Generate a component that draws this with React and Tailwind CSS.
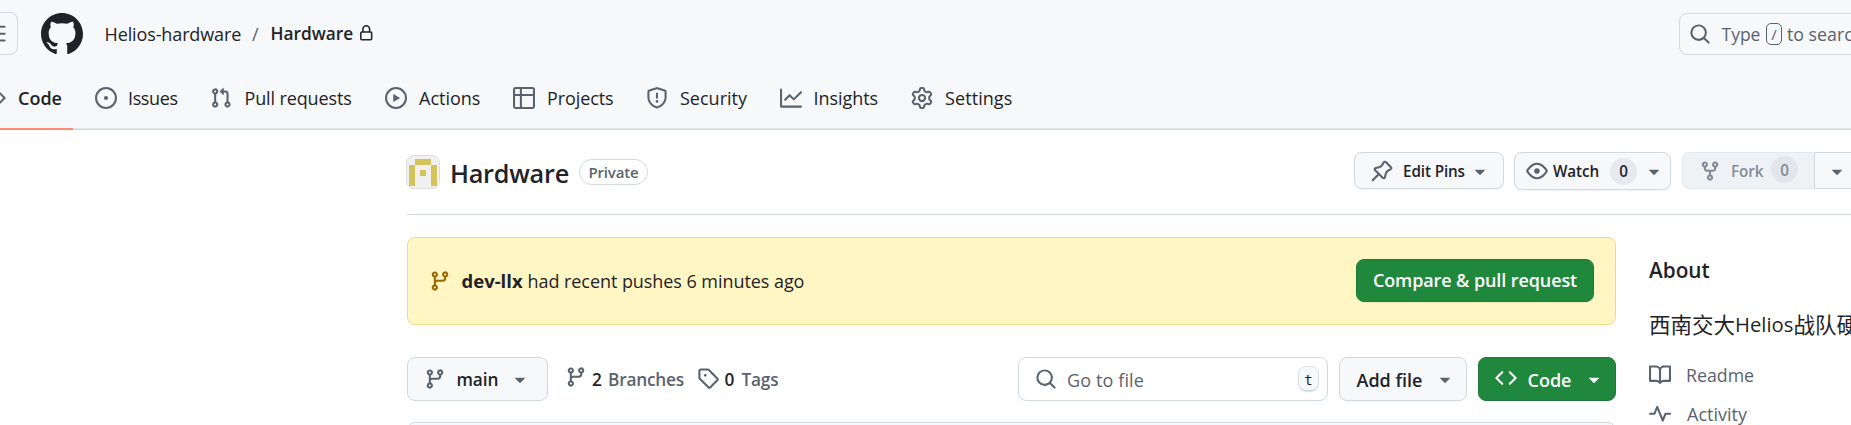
import React from "react";

const PATHS = {
  code: "m11.28 3.22 4.25 4.25a.75.75 0 0 1 0 1.06l-4.25 4.25a.749.749 0 0 1-1.275-.326.749.749 0 0 1 .215-.734L13.94 8l-3.72-3.72a.749.749 0 0 1 .326-1.275.749.749 0 0 1 .734.215Zm-6.56 0a.751.751 0 0 1 1.042.018.751.751 0 0 1 .018 1.042L2.06 8l3.72 3.72a.749.749 0 0 1-.326 1.275.749.749 0 0 1-.734-.215L.47 8.53a.75.75 0 0 1 0-1.06Z",
  issue: "M8 9.5a1.5 1.5 0 1 0 0-3 1.5 1.5 0 0 0 0 3ZM8 0a8 8 0 1 1 0 16A8 8 0 0 1 8 0ZM1.5 8a6.5 6.5 0 1 0 13 0 6.5 6.5 0 0 0-13 0Z",
  pull: "M1.5 3.25a2.25 2.25 0 1 1 3 2.122v5.256a2.251 2.251 0 1 1-1.5 0V5.372A2.25 2.25 0 0 1 1.5 3.25Zm5.677-.177L9.573.677A.25.25 0 0 1 10 .854V2.5h1A2.5 2.5 0 0 1 13.5 5v5.628a2.251 2.251 0 1 1-1.5 0V5a1 1 0 0 0-1-1h-1v1.646a.25.25 0 0 1-.427.177L7.177 3.427a.25.25 0 0 1 0-.354ZM3.75 2.5a.75.75 0 1 0 0 1.5.75.75 0 0 0 0-1.5Zm0 9.5a.75.75 0 1 0 0 1.5.75.75 0 0 0 0-1.5Zm8.25.75a.75.75 0 1 0 1.5 0 .75.75 0 0 0-1.5 0Z",
  play: "M8 0a8 8 0 1 1 0 16A8 8 0 0 1 8 0ZM1.5 8a6.5 6.5 0 1 0 13 0 6.5 6.5 0 0 0-13 0Zm4.879-2.773 4.264 2.559a.25.25 0 0 1 0 .428l-4.264 2.559A.25.25 0 0 1 6 10.559V5.442a.25.25 0 0 1 .379-.215Z",
  table: "M0 1.75C0 .784.784 0 1.75 0h12.5C15.216 0 16 .784 16 1.75v12.5A1.75 1.75 0 0 1 14.25 16H1.75A1.75 1.75 0 0 1 0 14.25ZM6.5 6.5v8h7.75a.25.25 0 0 0 .25-.25V6.5Zm8-1.5V1.75a.25.25 0 0 0-.25-.25H6.5V5Zm-13 1.5v7.75c0 .138.112.25.25.25H5v-8ZM5 5V1.5H1.75a.25.25 0 0 0-.25.25V5Z",
  shield: "M7.467.133a1.748 1.748 0 0 1 1.066 0l5.25 1.68A1.75 1.75 0 0 1 15 3.48V7c0 1.566-.32 3.182-1.303 4.682-.983 1.498-2.585 2.813-5.032 3.855a1.697 1.697 0 0 1-1.33 0c-2.447-1.042-4.049-2.357-5.032-3.855C1.32 10.182 1 8.566 1 7V3.48a1.75 1.75 0 0 1 1.217-1.667Zm.61 1.429a.25.25 0 0 0-.153 0l-5.25 1.68a.25.25 0 0 0-.174.238V7c0 1.358.275 2.666 1.057 3.86.784 1.194 2.121 2.34 4.366 3.297a.196.196 0 0 0 .154 0c2.245-.956 3.582-2.104 4.366-3.298C13.225 9.666 13.5 8.36 13.5 7V3.48a.251.251 0 0 0-.174-.237l-5.25-1.68ZM8.75 4.75v3a.75.75 0 0 1-1.5 0v-3a.75.75 0 0 1 1.5 0ZM9 10.5a1 1 0 1 1-2 0 1 1 0 0 1 2 0Z",
  graph: "M1.5 1.75V13.5h13.75a.75.75 0 0 1 0 1.5H.75a.75.75 0 0 1-.75-.75V1.75a.75.75 0 0 1 1.5 0Zm14.28 2.53-5.25 5.25a.75.75 0 0 1-1.06 0L7 7.06 4.28 9.78a.751.751 0 0 1-1.042-.018.751.751 0 0 1-.018-1.042l3.25-3.25a.75.75 0 0 1 1.06 0L10 7.94l4.72-4.72a.751.751 0 0 1 1.042.018.751.751 0 0 1 .018 1.042Z",
  gear: "M8 0a8.2 8.2 0 0 1 .701.031C9.444.095 9.99.645 10.16 1.29l.288 1.107c.018.066.079.158.212.224.231.114.454.243.668.386.123.082.233.09.299.071l1.103-.303c.644-.176 1.392.021 1.82.63.27.385.506.792.704 1.218.315.675.111 1.422-.364 1.891l-.814.806c-.049.048-.098.147-.088.294.016.257.016.515 0 .772-.01.147.038.246.088.294l.814.806c.475.469.679 1.216.364 1.891a7.977 7.977 0 0 1-.704 1.217c-.428.61-1.176.807-1.82.63l-1.102-.302c-.067-.019-.177-.011-.3.071a5.909 5.909 0 0 1-.668.386c-.133.066-.194.158-.211.224l-.29 1.106c-.168.646-.715 1.196-1.458 1.26a8.006 8.006 0 0 1-1.402 0c-.743-.064-1.289-.614-1.458-1.26l-.289-1.106c-.018-.066-.079-.158-.212-.224a5.738 5.738 0 0 1-.668-.386c-.123-.082-.233-.09-.299-.071l-1.103.303c-.644.176-1.392-.021-1.82-.63a8.12 8.12 0 0 1-.704-1.218c-.315-.675-.111-1.422.363-1.891l.815-.806c.05-.048.098-.147.088-.294a6.214 6.214 0 0 1 0-.772c.01-.147-.038-.246-.088-.294l-.815-.806C.635 6.045.431 5.298.746 4.623a7.92 7.92 0 0 1 .704-1.217c.428-.61 1.176-.807 1.82-.63l1.102.302c.067.019.177.011.3-.071.214-.143.437-.272.668-.386.133-.066.194-.158.211-.224l.29-1.106C6.009.645 6.556.095 7.299.03 7.53.01 7.764 0 8 0Zm-.571 1.525c-.036.003-.108.036-.137.146l-.289 1.105c-.147.561-.549.967-.998 1.189-.173.086-.34.183-.5.29-.417.278-.97.423-1.529.27l-1.103-.303c-.109-.03-.175.016-.195.045-.22.312-.412.644-.573.99-.014.031-.021.11.059.19l.815.806c.411.406.562.957.53 1.456a4.709 4.709 0 0 0 0 .582c.032.499-.119 1.05-.53 1.456l-.815.806c-.081.08-.073.159-.059.19.162.346.353.677.573.989.02.03.085.076.195.046l1.102-.303c.56-.153 1.113-.008 1.53.27.161.107.328.204.501.29.447.222.85.629.997 1.189l.289 1.105c.029.109.101.143.137.146a6.6 6.6 0 0 0 1.142 0c.036-.003.108-.036.137-.146l.289-1.105c.147-.561.549-.967.998-1.189.173-.086.34-.183.5-.29.417-.278.97-.423 1.529-.27l1.103.303c.109.029.175-.016.195-.045.22-.313.411-.644.573-.99.014-.031.021-.11-.059-.19l-.815-.806c-.411-.406-.562-.957-.53-1.456a4.709 4.709 0 0 0 0-.582c-.032-.499.119-1.05.53-1.456l.815-.806c.081-.08.073-.159.059-.19a6.464 6.464 0 0 0-.573-.989c-.02-.03-.085-.076-.195-.046l-1.102.303c-.56.153-1.113.008-1.53-.27a4.44 4.44 0 0 0-.501-.29c-.447-.222-.85-.629-.997-1.189l-.289-1.105c-.029-.11-.101-.143-.137-.146a6.6 6.6 0 0 0-1.142 0ZM11 8a3 3 0 1 1-6 0 3 3 0 0 1 6 0ZM9.5 8a1.5 1.5 0 1 0-3.001.001A1.5 1.5 0 0 0 9.5 8Z",
  pin: "m11.294.984 3.722 3.722a1.75 1.75 0 0 1-.504 2.826l-1.327.613a3.089 3.089 0 0 0-1.707 2.084l-.584 2.454c-.317 1.332-1.972 1.8-2.94.832L5.75 11.311 1.78 15.28a.749.749 0 1 1-1.06-1.06l3.969-3.97-2.204-2.204c-.968-.968-.5-2.623.832-2.94l2.454-.584a3.08 3.08 0 0 0 2.084-1.707l.613-1.327a1.75 1.75 0 0 1 2.826-.504ZM6.283 9.723l2.732 2.731a.25.25 0 0 0 .42-.119l.584-2.454a4.586 4.586 0 0 1 2.537-3.098l1.328-.613a.25.25 0 0 0 .072-.404l-3.722-3.722a.25.25 0 0 0-.404.072l-.613 1.328a4.584 4.584 0 0 1-3.098 2.537l-2.454.584a.25.25 0 0 0-.119.42l2.731 2.732Z",
  eye: "M8 2c1.981 0 3.671.992 4.933 2.078 1.27 1.091 2.187 2.345 2.637 3.023a1.62 1.62 0 0 1 0 1.798c-.45.678-1.367 1.932-2.637 3.023C11.67 13.008 9.981 14 8 14c-1.981 0-3.671-.992-4.933-2.078C1.797 10.83.88 9.576.43 8.898a1.62 1.62 0 0 1 0-1.798c.45-.677 1.367-1.931 2.637-3.022C4.33 2.992 6.019 2 8 2ZM1.679 7.932a.12.12 0 0 0 0 .136c.411.622 1.241 1.75 2.366 2.717C5.176 11.758 6.527 12.5 8 12.5c1.473 0 2.825-.742 3.955-1.715 1.124-.967 1.954-2.096 2.366-2.717a.12.12 0 0 0 0-.136c-.412-.621-1.242-1.75-2.366-2.717C10.824 4.242 9.473 3.5 8 3.5c-1.473 0-2.825.742-3.955 1.715-1.124.967-1.954 2.096-2.366 2.717ZM8 10a2 2 0 1 1-.001-3.999A2 2 0 0 1 8 10Z",
  fork: "M5 5.372v.878c0 .414.336.75.75.75h4.5a.75.75 0 0 0 .75-.75v-.878a2.25 2.25 0 1 1 1.5 0v.878a2.25 2.25 0 0 1-2.25 2.25h-1.5v2.128a2.251 2.251 0 1 1-1.5 0V8.5h-1.5A2.25 2.25 0 0 1 3.5 6.25v-.878a2.25 2.25 0 1 1 1.5 0ZM5 3.25a.75.75 0 1 0-1.5 0 .75.75 0 0 0 1.5 0Zm6.75.75a.75.75 0 1 0 0-1.5.75.75 0 0 0 0 1.5Zm-3 8.75a.75.75 0 1 0-1.5 0 .75.75 0 0 0 1.5 0Z",
  branch: "M9.5 3.25a2.25 2.25 0 1 1 3 2.122V6A2.5 2.5 0 0 1 10 8.5H6a1 1 0 0 0-1 1v1.128a2.251 2.251 0 1 1-1.5 0V5.372a2.25 2.25 0 1 1 1.5 0v1.836A2.493 2.493 0 0 1 6 7h4a1 1 0 0 0 1-1v-.628A2.25 2.25 0 0 1 9.5 3.25Zm-6 0a.75.75 0 1 0 1.5 0 .75.75 0 0 0-1.5 0Zm8.25-.75a.75.75 0 1 0 0 1.5.75.75 0 0 0 0-1.5ZM4.25 12a.75.75 0 1 0 0 1.5.75.75 0 0 0 0-1.5Z",
  tag: "M1 7.775V2.75C1 1.784 1.784 1 2.75 1h5.025c.464 0 .91.184 1.238.513l6.25 6.25a1.75 1.75 0 0 1 0 2.474l-5.026 5.026a1.75 1.75 0 0 1-2.474 0l-6.25-6.25A1.752 1.752 0 0 1 1 7.775Zm1.5 0c0 .066.026.13.073.177l6.25 6.25a.25.25 0 0 0 .354 0l5.025-5.025a.25.25 0 0 0 0-.354l-6.25-6.25a.25.25 0 0 0-.177-.073H2.75a.25.25 0 0 0-.25.25ZM6 5a1 1 0 1 1 0 2 1 1 0 0 1 0-2Z",
  search: "M10.68 11.74a6 6 0 0 1-7.922-8.982 6 6 0 0 1 8.982 7.922l3.04 3.04a.749.749 0 0 1-.326 1.275.749.749 0 0 1-.734-.215ZM11.5 7a4.499 4.499 0 1 0-8.997 0A4.499 4.499 0 0 0 11.5 7Z",
  book: "M0 1.75A.75.75 0 0 1 .75 1h4.253c1.227 0 2.317.59 3 1.501A3.743 3.743 0 0 1 11.006 1h4.245a.75.75 0 0 1 .75.75v10.5a.75.75 0 0 1-.75.75h-4.507a2.25 2.25 0 0 0-1.591.659l-.622.621a.75.75 0 0 1-1.06 0l-.622-.621A2.25 2.25 0 0 0 5.258 13H.75a.75.75 0 0 1-.75-.75Zm7.251 10.324.004-5.073-.002-2.253A2.25 2.25 0 0 0 5.003 2.5H1.5v9h3.757a3.75 3.75 0 0 1 1.994.574ZM8.755 4.75l-.004 7.322a3.752 3.752 0 0 1 1.992-.572H14.5v-9h-3.495a2.25 2.25 0 0 0-2.25 2.25Z",
  pulse: "M6 2c.306 0 .582.187.696.471L10 10.731l1.304-3.26A.751.751 0 0 1 12 7h3.25a.75.75 0 0 1 0 1.5h-2.742l-1.812 4.528a.751.751 0 0 1-1.392 0L6 4.77 4.696 8.03A.75.75 0 0 1 4 8.5H.75a.75.75 0 0 1 0-1.5h2.742l1.812-4.529A.751.751 0 0 1 6 2Z",
  lock: "M4 4a4 4 0 0 1 8 0v2h.25c.966 0 1.75.784 1.75 1.75v5.5A1.75 1.75 0 0 1 12.25 15h-8.5A1.75 1.75 0 0 1 2 13.25v-5.5C2 6.784 2.784 6 3.75 6H4Zm8.25 3.5h-8.5a.25.25 0 0 0-.25.25v5.5c0 .138.112.25.25.25h8.5a.25.25 0 0 0 .25-.25v-5.5a.25.25 0 0 0-.25-.25ZM10.5 6V4a2.5 2.5 0 1 0-5 0v2Z",
  caret: "m4.427 7.427 3.396 3.396a.25.25 0 0 0 .354 0l3.396-3.396A.25.25 0 0 0 11.396 7H4.604a.25.25 0 0 0-.177.427Z",
  bars: "M1 2.75A.75.75 0 0 1 1.75 2h12.5a.75.75 0 0 1 0 1.5H1.75A.75.75 0 0 1 1 2.75Zm0 5A.75.75 0 0 1 1.75 7h12.5a.75.75 0 0 1 0 1.5H1.75A.75.75 0 0 1 1 7.75ZM1.75 12h12.5a.75.75 0 0 1 0 1.5H1.75a.75.75 0 0 1 0-1.5Z",
  github: "M8 0c4.42 0 8 3.58 8 8a8.013 8.013 0 0 1-5.45 7.59c-.4.08-.55-.17-.55-.38 0-.27.01-1.13.01-2.2 0-.75-.25-1.23-.54-1.48 1.78-.2 3.65-.88 3.65-3.95 0-.88-.31-1.59-.82-2.15.08-.2.36-1.02-.08-2.12 0 0-.67-.22-2.2.82-.64-.18-1.32-.27-2-.27-.68 0-1.36.09-2 .27-1.53-1.03-2.2-.82-2.2-.82-.44 1.1-.16 1.92-.08 2.12-.51.56-.82 1.28-.82 2.15 0 3.06 1.86 3.75 3.64 3.95-.23.2-.44.55-.51 1.07-.46.21-1.61.55-2.33-.66-.15-.24-.6-.83-1.23-.82-.67.01-.27.38.01.53.34.19.73.9.82 1.13.16.45.68 1.31 2.69.94 0 .67.01 1.3.01 1.49 0 .21-.15.45-.55.38A7.995 7.995 0 0 1 0 8c0-4.42 3.58-8 8-8Z",
};

function Icon({ name, className = "" }) {
  return (
    <svg viewBox="0 0 16 16" fill="currentColor" className={`shrink-0 ${className || "size-[22px] text-[#59636e]"}`}>
      <path fillRule="evenodd" d={PATHS[name]} />
    </svg>
  );
}

const TABS = [
  { icon: "code", label: "Code", box: "-ml-[16px] w-[111px]", text: "ml-[12px] font-semibold" },
  { icon: "issue", label: "Issues", box: "w-[115px]", text: "ml-[11px] tracking-[-0.37px]" },
  { icon: "pull", label: "Pull requests", box: "w-[175px]", text: "ml-[12.5px] tracking-[-0.13px]" },
  { icon: "play", label: "Actions", box: "w-[128px]", text: "ml-[12px]" },
  { icon: "table", label: "Projects", box: "w-[133px]", text: "ml-[12px] tracking-[-0.1px]" },
  { icon: "shield", label: "Security", box: "w-[134px]", text: "ml-[12px]" },
  { icon: "graph", label: "Insights", box: "w-[131px]", text: "ml-[11.5px] tracking-[-0.05px]" },
  { icon: "gear", label: "Settings", box: "w-[120px]", text: "ml-[12px] tracking-[0.08px]" },
];

function Header() {
  return (
    <header className="h-[130px] border-b border-[#d1d9e0] bg-[#f6f8fa] shadow-[inset_0_-1px_0_#dfe5ea]">
      <div className="flex h-[67px] items-center">
        <div className="-ml-[26px] flex h-[43px] w-[44px] shrink-0 items-center justify-center rounded-lg border border-[#d1d9e0]">
          <Icon name="bars" />
        </div>
        <Icon name="github" className="ml-[22.5px] size-[42px] text-[#1f2328]" />
        <span className="ml-[22px] w-[147.5px] shrink-0 tracking-[-0.12px]">Helios-hardware</span>
        <span className="w-[18.5px] shrink-0 text-[#59636e]">/</span>
        <span className="w-[87px] shrink-0 text-[17.25px] font-semibold">Hardware</span>
        <Icon name="lock" className="size-[16.5px] text-[#1f2328]" />
        <div className="-mr-[28px] ml-auto flex h-[42px] w-[200px] shrink-0 items-center overflow-hidden rounded-lg border border-[#d1d9e0] text-[#59636e]">
          <Icon name="search" className="ml-[8.5px] size-[22px] text-[#59636e]" />
          <span className="ml-[11px] w-[44.5px] shrink-0 text-[17.5px]">Type</span>
          <kbd className="flex h-[22px] w-[16px] shrink-0 items-center justify-center rounded-[5px] border border-[#59636e] font-[Open_Sans] text-[15px]">
            /
          </kbd>
          <span className="ml-[5px] shrink-0 text-[17.75px]">to search</span>
        </div>
      </div>
      <nav className="relative flex h-[62px] items-center">
        {TABS.map((tab) => (
          <div key={tab.label} className={`flex shrink-0 items-center ${tab.box}`}>
            <Icon name={tab.icon} />
            <span className={tab.text}>{tab.label}</span>
          </div>
        ))}
        <div className="absolute -bottom-px left-0 h-[2px] w-[73px] bg-[#fd8c73]" />
      </nav>
    </header>
  );
}

function Avatar() {
  return (
    <div className="mt-[3px] flex size-[34px] shrink-0 justify-center rounded-lg border border-[#dcdee0] bg-[#f0f0f0] pt-[3px]">
      <svg viewBox="0 0 28 27" className="h-[27px] w-[28px] text-[#d4c35a]" fill="currentColor" shapeRendering="crispEdges">
        <rect x="6" y="0" width="16" height="6" />
        <rect x="0" y="6" width="6" height="21" />
        <rect x="22" y="6" width="6" height="21" />
        <rect x="11" y="11" width="6" height="6" />
      </svg>
    </div>
  );
}

const buttonBase = "flex shrink-0 items-center rounded-lg border border-[#d1d9e0] bg-[#f6f8fa]";

function RepoTitle() {
  return (
    <div className="ml-[406px] flex h-[84px] items-start pt-[22px]">
      <Avatar />
      <h1 className="ml-[10px] mt-[4px] w-[129px] shrink-0 text-[25.25px] leading-[34px] font-semibold tracking-[-0.25px]">Hardware</h1>
      <span className="mt-[7px] flex h-[26px] w-[69px] shrink-0 items-center justify-center rounded-full border border-[#d1d9e0] text-[15px] font-semibold tracking-[-0.15px] text-[#59636e]">
        Private
      </span>
      <div className="ml-[706px] flex shrink-0 items-start text-[15.25px] font-semibold">
        <div className={`${buttonBase} h-[37px] w-[150px] shadow-xs`}>
          <Icon name="pin" className="ml-[16px] size-[22px] text-[#59636e]" />
          <span className="ml-[10px] w-[65.5px] shrink-0 pt-px tracking-[-0.12px]">Edit Pins</span>
          <Icon name="caret" className="mt-px size-[22px] text-[#59636e]" />
        </div>
        <div className={`${buttonBase} ml-[10px] h-[38px] w-[157px] shadow-xs`}>
          <Icon name="eye" className="ml-[11px] size-[22px] text-[#59636e]" />
          <span className="ml-[5px] w-[57px] shrink-0 tracking-[-0.12px]">Watch</span>
          <span className="flex size-[27px] shrink-0 items-center justify-center rounded-full bg-[#e6eaef]">0</span>
          <Icon name="caret" className="ml-[6px] size-[22px] text-[#59636e]" />
        </div>
        <div className="ml-[11px] flex h-[37px] w-[132px] shrink-0 items-center rounded-l-lg border border-r-0 border-[#e3e8ec] bg-[#eff2f5] text-[#818b98]">
          <Icon name="fork" className="ml-[16px] size-[22px] text-[#818b98]" />
          <span className="ml-[10px] w-[40px] shrink-0 pt-px tracking-[-0.1px]">Fork</span>
          <span className="-mt-[2px] flex size-[27px] shrink-0 items-center justify-center rounded-full bg-[#e2e6ea]">0</span>
        </div>
        <div className="flex h-[37px] w-[46px] shrink-0 items-center justify-center rounded-r-lg border border-[#d1d9e0] bg-[#f6f8fa]">
          <Icon name="caret" className="size-[22px] text-[#59636e]" />
        </div>
      </div>
    </div>
  );
}

function PushBanner() {
  return (
    <div className="flex h-[88px] items-center rounded-lg border border-[#eedb88] bg-[#fff6c4]">
      <Icon name="branch" className="ml-[21px] size-[22px] text-[#9a6700]" />
      <span className="ml-[10.5px] w-[66px] shrink-0 text-[18.5px] font-bold">dev-llx</span>
      <span className="shrink-0 tracking-[-0.06px]">had recent pushes 6 minutes ago</span>
      <button className="-mt-[2px] mr-[21px] ml-auto h-[43px] w-[238px] rounded-lg border border-[#1f7a39] bg-[#1f883d] font-semibold tracking-[-0.1px] text-white shadow-xs">
        Compare & pull request
      </button>
    </div>
  );
}

function Toolbar() {
  return (
    <div className="mt-[32px] flex h-[44px] items-center">
      <div className={`${buttonBase} h-[44px] w-[141px]`}>
        <Icon name="branch" className="ml-[15.5px] size-[22px] text-[#59636e]" />
        <span className="ml-[11px] w-[52.5px] shrink-0 pt-px text-[17.25px] font-semibold tracking-[-0.1px]">main</span>
        <Icon name="caret" />
      </div>
      <Icon name="branch" className="-mt-[4px] ml-[16.5px] size-[22px] text-[#59636e]" />
      <span className="ml-[5.5px] w-[16px] shrink-0 pt-px text-[17.25px] font-semibold">2</span>
      <span className="w-[89px] shrink-0 pt-px text-[17.25px] font-semibold tracking-[-0.22px] text-[#59636e]">Branches</span>
      <Icon name="tag" className="-mt-[3px] size-[22px] text-[#59636e]" />
      <span className="ml-[5.5px] w-[17px] shrink-0 pt-px text-[17.25px] font-semibold">0</span>
      <span className="shrink-0 pt-px text-[17.25px] font-semibold tracking-[-0.2px] text-[#59636e]">Tags</span>
      <div className="ml-auto flex h-[44px] w-[310px] shrink-0 items-center rounded-lg border border-[#d1d9e0] bg-white">
        <Icon name="search" className="ml-[16px] size-[22px] text-[#59636e]" />
        <span className="ml-[10px] pt-px tracking-[0.12px] text-[#59636e]">Go to file</span>
        <kbd className="mr-[8px] ml-auto flex h-[26px] w-[21px] items-center justify-center rounded-lg border border-[#dbe1e7] bg-[#f6f8fa] pt-px font-[DejaVu_Sans_Mono] text-[14px] shadow-[inset_0_-1px_0_#d1d9e0]">
          t
        </kbd>
      </div>
      <div className={`${buttonBase} ml-[11px] h-[44px] w-[128px] shadow-xs`}>
        <span className="ml-[16.5px] w-[77.5px] shrink-0 pt-px font-semibold">Add file</span>
        <Icon name="caret" />
      </div>
      <div className="ml-[11px] flex h-[44px] w-[138px] shrink-0 items-center rounded-lg border border-[#1f7a39] bg-[#1f883d] text-white">
        <Icon name="code" className="-mt-[2px] ml-[15.5px] size-[22px] text-white" />
        <span className="ml-[11px] w-[55.5px] shrink-0 pt-px font-semibold">Code</span>
        <Icon name="caret" className="size-[22px] text-white" />
      </div>
    </div>
  );
}

function About() {
  return (
    <aside className="ml-[33px] w-[320px] shrink-0 pt-[18px]">
      <h2 className="text-[20.75px] leading-[30px] font-semibold">About</h2>
      <p className="mt-[23px] flex items-center text-[20.25px] leading-[32px] whitespace-nowrap">
        <span className="font-['Noto_Sans_CJK_SC'] text-[21.5px]">西南交大</span>
        <span>Helios</span>
        <span className="font-['Noto_Sans_CJK_SC'] text-[21.5px]">战队硬件</span>
      </p>
      <div className="mt-[21px] flex flex-col gap-[11px] text-[#59636e]">
        <div className="flex h-[28px] items-center">
          <Icon name="book" />
          <span className="ml-[15px] text-[17.75px]">Readme</span>
        </div>
        <div className="flex h-[28px] items-center">
          <Icon name="pulse" />
          <span className="ml-[16px]">Activity</span>
        </div>
      </div>
    </aside>
  );
}

export default function App() {
  return (
    <div className="h-[425px] w-full overflow-hidden bg-white font-['Open_Sans','Noto_Sans_CJK_SC',sans-serif] text-[18px] leading-[24px] whitespace-nowrap text-[#1f2328]">
      <Header />
      <RepoTitle />
      <div className="ml-[407px] h-px bg-[#d1d9e0]" />
      <div className="mt-[22px] ml-[407px] flex">
        <main className="w-[1209px] shrink-0">
          <PushBanner />
          <Toolbar />
          <div className="mt-[21px] h-[40px] rounded-t-lg border border-[#d1d9e0] bg-[#f6f8fa]" />
        </main>
        <About />
      </div>
    </div>
  );
}
